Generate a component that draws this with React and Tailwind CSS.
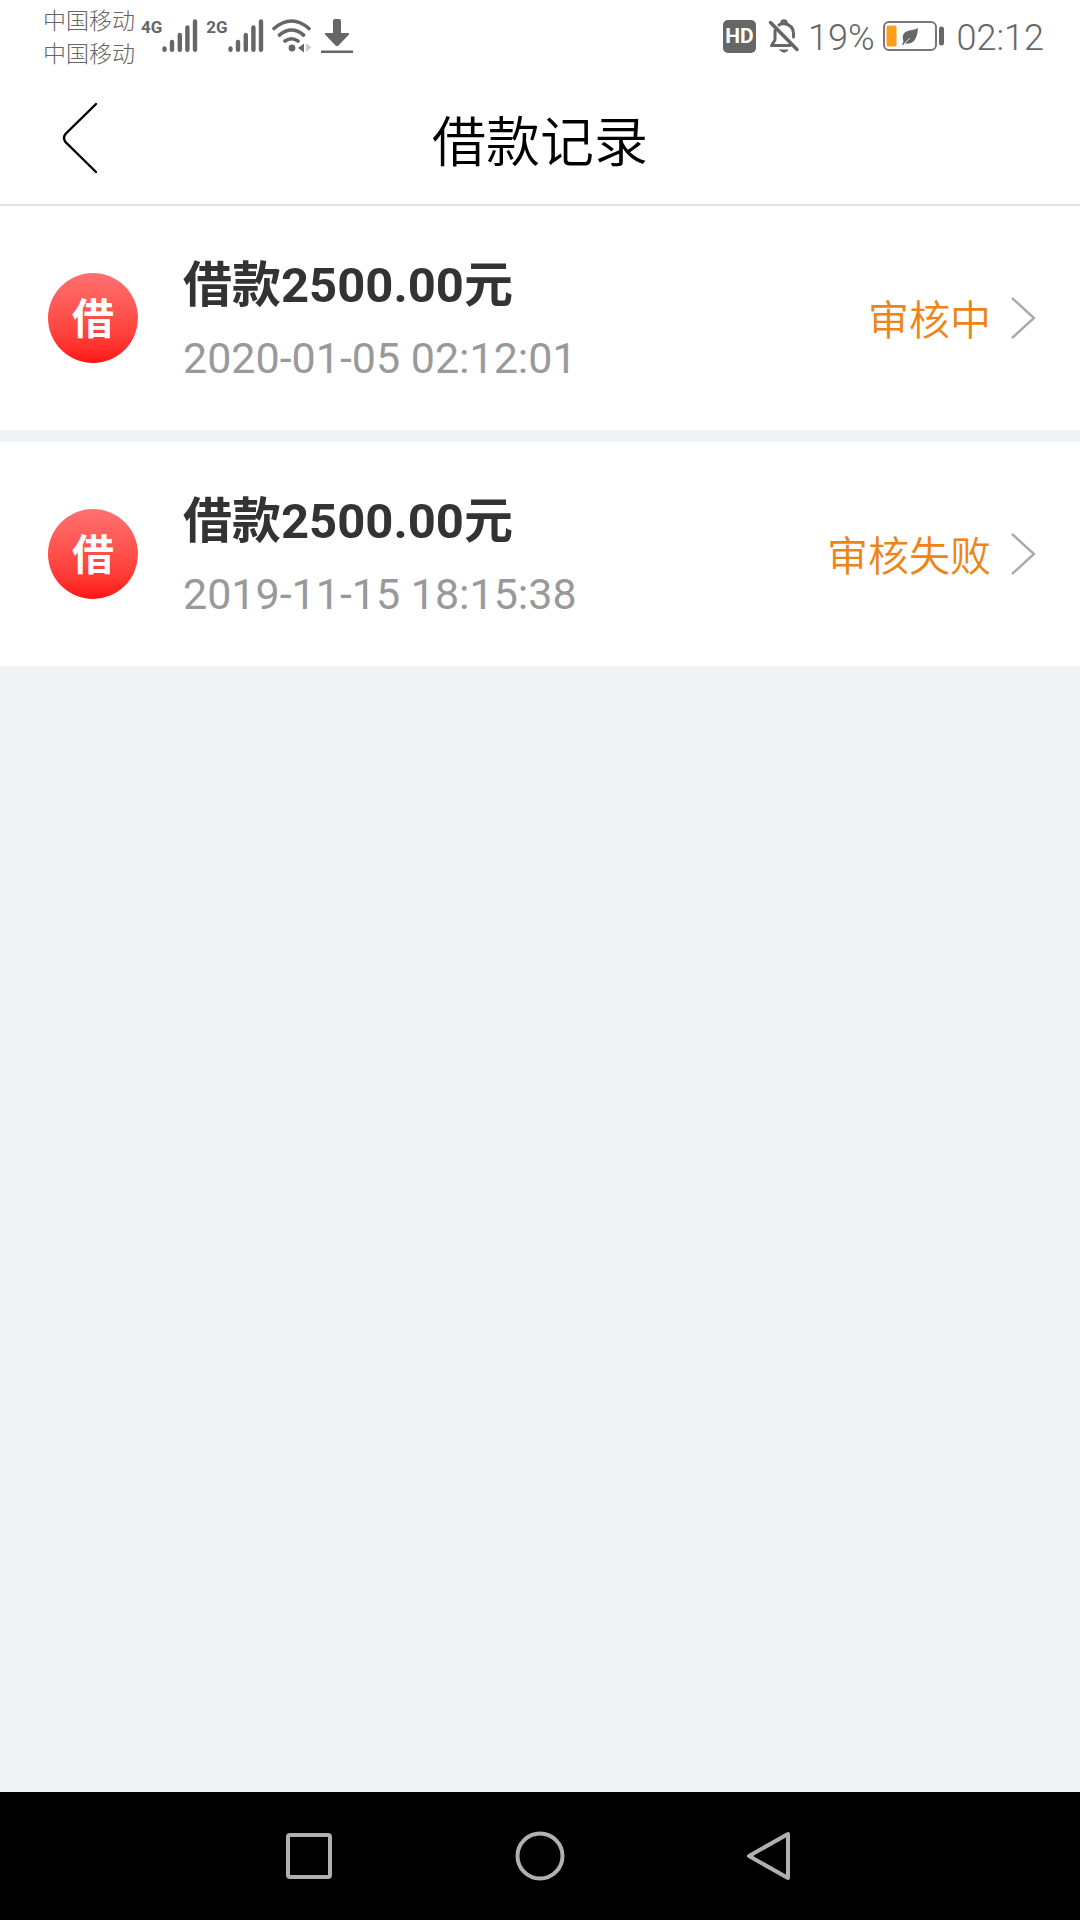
const records = [
  { id: 1, title: "借款2500.00元", time: "2020-01-05 02:12:01", status: "审核中" },
  { id: 2, title: "借款2500.00元", time: "2019-11-15 18:15:38", status: "审核失败" },
];

function Signal({ label }) {
  return (
    <div className="flex items-start">
      <span className="text-[17px] leading-4 font-bold">{label}</span>
      <svg width="36" height="34" viewBox="0 0 36 34" stroke="currentColor" strokeWidth="4.4" strokeLinecap="round" aria-hidden="true">
        <path d="M2.5 29.5V30.8M10 23V30.8M17.8 16V30.8M25.4 8.5V30.8M33 2.5V30.8" />
      </svg>
    </div>
  );
}

function StatusBar() {
  return (
    <div className="flex h-[72px] items-start justify-between bg-white pr-9 pl-[43px] text-[#666]">
      <div className="flex items-start">
        <div className="pt-[5px] text-[23px] leading-[33px] font-light">
          <p>中国移动</p>
          <p>中国移动</p>
        </div>
        <div className="ml-[6px] flex gap-2 pt-[19px]">
          <Signal label="4G" />
          <Signal label="2G" />
        </div>
        <svg className="mt-[19px] ml-2" width="40" height="34" viewBox="0 0 40 34" fill="none" stroke="currentColor" strokeWidth="3.6" strokeLinecap="round" aria-hidden="true">
          <path d="M2 9.5Q19.500 -5.500 37 9.500M7.500 16Q19.500 6 31.500 16M13 22Q19.500 17.500 26 22" />
          <circle cx="20" cy="29" r="3.400" fill="currentColor" stroke="none" />
          <path d="M26 29L32 24.500V33.500Z" fill="currentColor" stroke="none" />
          <path d="M34 24.500L39.500 28L34 33Z" fill="#ccc" stroke="none" />
        </svg>
        <svg className="mt-[19px] ml-2" width="34" height="34" viewBox="0 0 34 34" fill="currentColor" aria-hidden="true">
          <path d="M13 2Q13 0 15 0H19Q21 0 21 2V14H28Q30 14 28.500 16L18.500 26.500Q17 28 15.500 26.500L5.500 16Q4 14 6 14H13ZM1 31.500H33V34H1Z" />
        </svg>
      </div>
      <div className="flex h-[72px] items-center text-[36px] leading-[72px] font-[350]">
        <span className="flex h-[33px] w-[33px] items-center justify-center rounded-[5px] bg-[#666] text-[21px] font-bold text-white">HD</span>
        <svg className="ml-3" width="32" height="34" viewBox="0 0 32 34" fill="none" stroke="currentColor" strokeLinecap="round" strokeLinejoin="round" aria-hidden="true">
          <path d="M2.500 3.500L29 30.500" strokeWidth="3.500" />
          <path d="M7 11.500V21L3.500 26.500H22M11 6Q13 4.500 16 4.500Q25 6 25.500 14V18" strokeWidth="3" />
          <path d="M13.500 4Q13.500 1.500 16 1.500Q18.500 1.500 18.500 4" strokeWidth="2.500" />
          <path d="M12 31H20Q16 35.500 12 31Z" fill="currentColor" />
        </svg>
        <span className="ml-2 pt-1">19%</span>
        <svg className="ml-2" width="62" height="30" viewBox="0 0 62 30" fill="none" aria-hidden="true">
          <rect x="1" y="1" width="52" height="28" rx="5" stroke="#777" strokeWidth="2" />
          <rect x="3.500" y="4.500" width="10" height="21" rx="1.500" fill="#ff9e1b" />
          <path d="M35 7Q34 24 22 22.500L20 24L19 23L20.500 21Q17 10 29 9Q33 8.500 35 7Z" fill="#666" />
          <path d="M21 23L27 17" stroke="white" strokeWidth="0.800" />
          <path d="M58.500 8V22" stroke="#666" strokeWidth="5" strokeLinecap="round" />
        </svg>
        <span className="ml-3 pt-1">02:12</span>
      </div>
    </div>
  );
}

function Record({ title, time, status }) {
  return (
    <li>
      <button type="button" className="flex h-56 w-full items-center bg-white pr-[44px] pl-12 text-left">
        <span className="flex h-[90px] w-[90px] shrink-0 items-center justify-center rounded-full bg-gradient-to-b from-[#ff7070] to-[#ff1212] pt-1 text-[42px] leading-none font-bold text-white">借</span>
        <span className="ml-[45px] flex flex-1 flex-col gap-1 pt-1">
          <span className="text-[49px] leading-[72px] font-bold text-[#333]">{title}</span>
          <span className="text-[43px] leading-[64px] text-[#999]">{time}</span>
        </span>
        <span className="pt-2 text-[41px] font-[350] text-[#ee8416]">{status}</span>
        <svg className="ml-5" width="25" height="42" viewBox="0 0 25 42" fill="none" stroke="#aaa" strokeWidth="2.400" aria-hidden="true">
          <path d="M1 1L23 21L1 41" />
        </svg>
      </button>
    </li>
  );
}

export default function App() {
  return (
    <div className="flex min-h-screen flex-col bg-[#eff3f6] font-['Roboto','Noto_Sans_CJK_SC',sans-serif]">
      <StatusBar />
      <header className="grid h-[134px] grid-cols-[1fr_auto_1fr] items-center border-b-2 border-[#e0e0e0] bg-white px-[60px]">
        <button type="button" aria-label="返回" className="w-10">
          <svg width="40" height="72" viewBox="0 0 40 72" fill="none" stroke="black" strokeWidth="2.400" strokeLinecap="round">
            <path d="M36 2L5.500 32Q2.500 36 5.500 40L36 70" />
          </svg>
        </button>
        <h1 className="pt-3 text-[54px] leading-[72px] font-[350] text-black">借款记录</h1>
      </header>
      <main className="flex-1">
        <ul className="flex flex-col gap-3">
          {records.map((r) => (
            <Record key={r.id} {...r} />
          ))}
        </ul>
      </main>
      <nav className="flex h-32 items-center justify-center gap-[180px] bg-black text-[#b0b0b0]">
        <button type="button" aria-label="最近任务">
          <svg width="50" height="50" viewBox="0 0 50 50" fill="none" stroke="currentColor" strokeWidth="4">
            <rect x="3" y="4" width="42" height="42" rx="2" />
          </svg>
        </button>
        <button type="button" aria-label="主屏幕">
          <svg width="50" height="50" viewBox="0 0 50 50" fill="none" stroke="currentColor" strokeWidth="4">
            <circle cx="25" cy="25" r="22.500" />
          </svg>
        </button>
        <button type="button" aria-label="后退">
          <svg width="50" height="50" viewBox="0 0 50 50" fill="none" stroke="currentColor" strokeWidth="4" strokeLinejoin="round">
            <path d="M4 25L43 3V47Z" />
          </svg>
        </button>
      </nav>
    </div>
  );
}
